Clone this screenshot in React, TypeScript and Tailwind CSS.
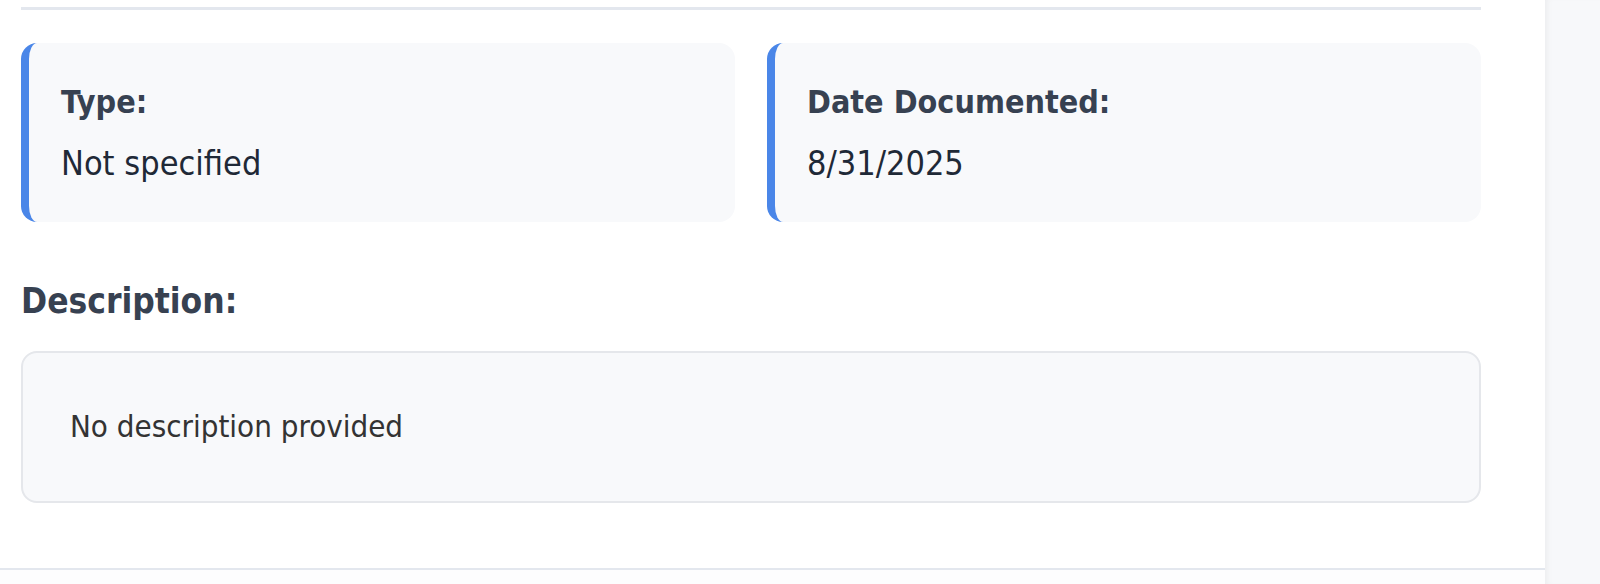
const font = { fontFamily: '"DejaVu Sans Condensed", "DejaVu Sans", sans-serif' };

const InfoCard = ({ label, value }: { label: string; value: string }) => {
  return (
    <div className="flex-1 h-[179px] rounded-[16px] bg-[#f8f9fb] border-l-[8px] border-[#4a86e8] pl-[32px] pt-[43px]">
      <div className="text-[32px] leading-none font-bold text-[#374151]">{label}</div>
      <div className="mt-[28px] text-[34px] leading-none text-[#1f2937]">{value}</div>
    </div>
  );
};

const App = () => {
  return (
    <div className="flex h-[584px] w-full overflow-hidden bg-white" style={font}>
      <main className="w-[1545px] shrink-0 flex flex-col">
        <div className="pl-[21px]">
          <div className="mt-[7px] h-[3px] w-[1460px] bg-[#e3e7ee]"></div>
          <div className="mt-[33px] flex gap-[32px] w-[1460px]">
            <InfoCard label="Type:" value="Not specified" />
            <InfoCard label="Date Documented:" value="8/31/2025" />
          </div>
          <h2 className="mt-[62px] text-[35px] leading-none font-bold text-[#374151]">Description:</h2>
          <div className="mt-[32px] h-[152px] w-[1460px] rounded-[16px] border-2 border-[#e5e7eb] bg-[#f8f9fb] pl-[47px] pt-[58px]">
            <p className="text-[31px] leading-none text-[#333333]">No description provided</p>
          </div>
        </div>
        <div className="mt-[65px] h-[2px] w-full bg-[#e3e7ee]"></div>
        <div className="flex-1 bg-[#fdfdfe]"></div>
      </main>
      <aside className="flex-1 bg-[#f7f8fa] shadow-[inset_6px_0_6px_-4px_rgba(0,0,0,0.05)]"></aside>
    </div>
  );
};

export default App;
